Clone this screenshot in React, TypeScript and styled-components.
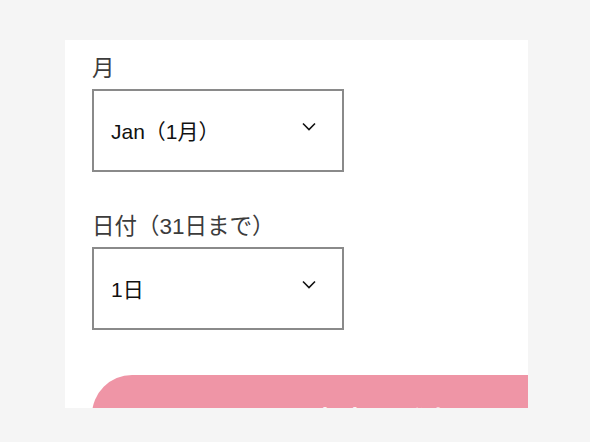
import React from "react";
import styled, { createGlobalStyle } from "styled-components";

const GlobalStyle = createGlobalStyle`
    html, body {
        margin: 0;
        padding: 0;
        background-color: #f5f5f5;
        font-family: "Liberation Sans", "Noto Sans CJK JP", sans-serif;
    }
`;

const Page = styled.div`
    width: 590px;
    height: 442px;
    padding: 40px 0 0 65px;
    box-sizing: border-box;
`;

const Panel = styled.div`
    width: 463px;
    height: 368px;
    padding: 14px 0 0 27px;
    box-sizing: border-box;
    background-color: #ffffff;
    overflow: hidden;
`;

const Field = styled.div<{ $gap?: number }>`
    display: flex;
    flex-direction: column;
    gap: 5px;
    margin-bottom: ${(p) => p.$gap ?? 0}px;
`;

const Label = styled.div`
    font-size: 22.5px;
    line-height: 30px;
    color: #3c3c3c;
`;

const SelectBox = styled.div`
    display: flex;
    align-items: center;
    justify-content: space-between;
    width: 252px;
    height: 83px;
    padding: 0 26px 2px 17px;
    box-sizing: border-box;
    border: 2px solid #8a8a8a;
    font-size: 21px;
    color: #111111;
    cursor: pointer;
`;

const Button = styled.button`
    display: flex;
    align-items: center;
    width: 640px;
    height: 80px;
    padding: 6px 0 0 160px;
    border: none;
    border-radius: 40px;
    background-color: #ef95a6;
    color: #ffffff;
    font-family: inherit;
    font-size: 26px;
    font-weight: bold;
    letter-spacing: 4px;
    cursor: pointer;
`;

const Chevron = () => (
    <svg width="14" height="9" viewBox="0 0 14 9" style={{ marginTop: -6 }}>
        <path d="M1 1.5 L7 7.5 L13 1.5" fill="none" stroke="#111" strokeWidth="1.6" />
    </svg>
);

interface ISelectProps {
    label: string;
    value: string;
    gap?: number;
}

const Select = ({ label, value, gap }: ISelectProps) => (
    <Field $gap={gap}>
        <Label>{label}</Label>
        <SelectBox>
            <span>{value}</span>
            <Chevron />
        </SelectBox>
    </Field>
);

const App = () => {
    return (
        <>
            <GlobalStyle />
            <Page>
                <Panel>
                    <Select label="月" value="Jan（1月）" gap={40} />
                    <Select label="日付（31日まで）" value="1日" gap={45} />
                    <Button>この内容で登録する</Button>
                </Panel>
            </Page>
        </>
    );
};

export default App;
